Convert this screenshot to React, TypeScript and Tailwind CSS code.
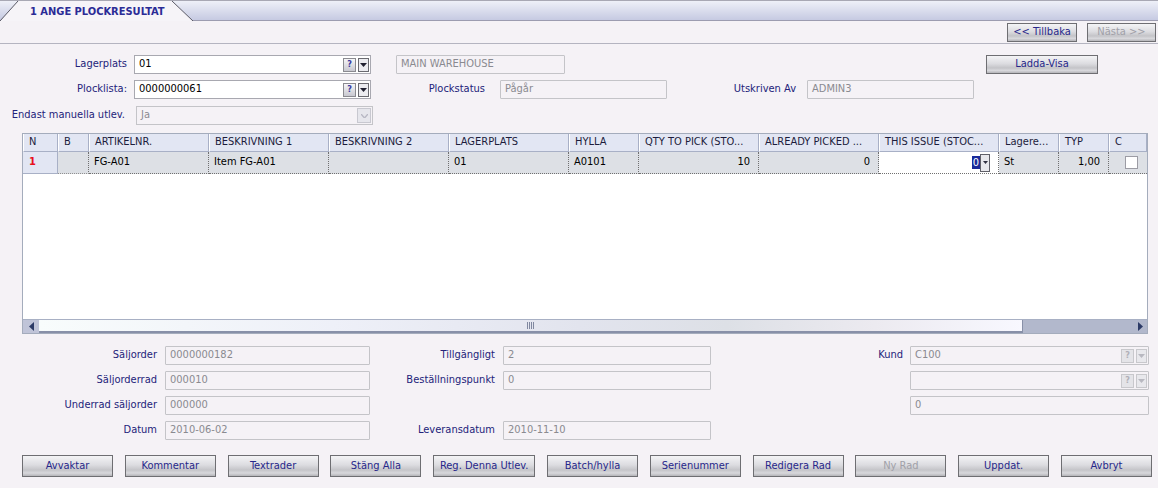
import React from 'react';

const font = { fontFamily: '"DejaVu Sans Condensed", "Liberation Sans", Arial, sans-serif' };

const Btn: React.FC<{ label: string; w: string; h?: string; disabled?: boolean }> = ({ label, w, h = 'h-[19px]', disabled }) => (
  <div
    className={`${w} ${h} flex items-center justify-center border border-[#6e6e72] bg-[linear-gradient(#f4f4f6_0%,#dcdce0_45%,#c4c4c8_70%,#d8d8dc_85%,#b4b4b8_100%)] text-[11px] ${
      disabled ? 'text-[#a0a0a8]' : 'text-[#27278a]'
    }`}
  >
    {label}
  </div>
);

const Lookup: React.FC<{ disabled?: boolean }> = ({ disabled }) => (
  <div className="flex items-center gap-[2px] pr-[1px]">
    <div
      className={`w-[13px] h-[14px] flex items-center justify-center border ${
        disabled ? 'border-[#c8c8cc] text-[#b0b0b8] bg-[#e4e4e8]' : 'border-[#8a8a90] text-[#3a3aa0] bg-[linear-gradient(#f6f6f8,#c8c8d0)]'
      } text-[9px] font-bold leading-none`}
    >
      ?
    </div>
    <div
      className={`w-[11px] h-[14px] flex items-center justify-center border ${
        disabled ? 'border-[#c8c8cc] bg-[#e8e8ec]' : 'border-[#6a6a70] bg-[#ececf0]'
      }`}
    >
      <svg width="7" height="4" viewBox="0 0 7 4">
        <path d="M0 0h7L3.5 4z" fill={disabled ? '#b8b8c0' : '#202030'} />
      </svg>
    </div>
  </div>
);

const RoField: React.FC<{ w: string; value: string; lookup?: boolean }> = ({ w, value, lookup }) => (
  <div className={`${w} h-[19px] flex items-center border border-[#c4c4c8] bg-[#f5f2f6] rounded-[1px]`}>
    <span className="flex-1 pl-[4px] text-[#8a8a90] truncate">{value}</span>
    {lookup && <Lookup disabled />}
  </div>
);

const Label: React.FC<{ w: string; text: string }> = ({ w, text }) => (
  <div className={`${w} text-right text-[#23237a] shrink-0`}>{text}</div>
);

const cols = 'grid-cols-[35px_31px_120px_120px_120px_120px_70px_120px_120px_120px_60px_50px_38px]';

const headers = [
  'N',
  'B',
  'ARTIKELNR.',
  'BESKRIVNING 1',
  'BESKRIVNING 2',
  'LAGERPLATS',
  'HYLLA',
  'QTY TO PICK (STO...',
  'ALREADY PICKED ...',
  'THIS ISSUE (STOC...',
  'Lagere...',
  'TYP',
  'C',
];

export default function App() {
  return (
    <div className="w-[1158px] h-[488px] overflow-hidden bg-[#f5f2f6] text-[11px] text-black" style={font}>
      {/* tab strip */}
      <div className="h-[21px] border-t border-[#a8a8b4] border-b border-b-[#9c9cb0] bg-[linear-gradient(#eef0f8,#c6cae2)] flex">
        <div className="relative w-[196px] h-full">
          <svg className="absolute inset-0" width="196" height="20" viewBox="0 0 196 20">
            <path d="M0 20 L18 0 L172 0 L193 20 Z" fill="#f6f4f8" />
            <path d="M0 20 L18 0 M172 0 L193 20" stroke="#5a5a66" strokeWidth="1" fill="none" />
          </svg>
          <div className="relative pl-[30px] pt-[3px] font-bold text-[#2b2b96] text-[11px]">1 ANGE PLOCKRESULTAT</div>
        </div>
      </div>

      {/* nav buttons */}
      <div className="h-[23px] flex items-center justify-end gap-[10px] pr-[2px] border-b border-[#b4b4c0]">
        <Btn label="<< Tillbaka" w="w-[70px]" />
        <Btn label="Nästa >>" w="w-[69px]" disabled />
      </div>

      {/* header form */}
      <div className="pt-[11px] flex flex-col gap-[6px]">
        <div className="flex items-center h-[19px]">
          <Label w="w-[127px]" text="Lagerplats" />
          <div className="ml-[7px] w-[237px] h-[19px] flex items-center border border-[#a8a8b0] bg-white">
            <span className="flex-1 pl-[4px]">01</span>
            <Lookup />
          </div>
          <div className="ml-[25px]">
            <RoField w="w-[169px]" value="MAIN WAREHOUSE" />
          </div>
          <div className="ml-[421px]">
            <Btn label="Ladda-Visa" w="w-[112px]" />
          </div>
        </div>
        <div className="flex items-center h-[19px]">
          <Label w="w-[127px]" text="Plocklista:" />
          <div className="ml-[7px] w-[237px] h-[19px] flex items-center border border-[#a8a8b0] bg-white">
            <span className="flex-1 pl-[4px]">0000000061</span>
            <Lookup />
          </div>
          <Label w="w-[114px]" text="Plockstatus" />
          <div className="ml-[15px]">
            <RoField w="w-[167px]" value="Pågår" />
          </div>
          <Label w="w-[129px]" text="Utskriven Av" />
          <div className="ml-[11px]">
            <RoField w="w-[167px]" value="ADMIN3" />
          </div>
        </div>
        <div className="flex items-center h-[19px] mt-[1px]">
          <Label w="w-[125px]" text="Endast manuella utlev." />
          <div className="ml-[11px] w-[237px] h-[19px] flex items-center border border-[#c4c4c8] bg-[#f5f2f6]">
            <span className="flex-1 pl-[4px] text-[#8a8a90]">Ja</span>
            <div className="w-[14px] h-[15px] mr-[1px] flex items-center justify-center border border-[#c8c8d0] bg-[#e6e6ec]">
              <svg width="7" height="4" viewBox="0 0 7 4">
                <path d="M0 0L3.5 4L7 0" stroke="#b8b8c4" fill="none" strokeWidth="1.4" />
              </svg>
            </div>
          </div>
        </div>
      </div>

      {/* grid */}
      <div className="ml-[22px] mt-[8px] w-[1126px] h-[201px] border border-[#a4acbc] bg-white flex flex-col">
        <div className={`grid ${cols} h-[18px] bg-[#e2e6f3]`}>
          {headers.map((h, i) => (
            <div
              key={i}
              className="border-l border-l-white border-r border-r-[#a8b0c6] border-b border-b-[#a8b0c6] pl-[5px] flex items-center text-[#1c1c3c] truncate"
            >
              {h}
            </div>
          ))}
        </div>
        <div className={`grid ${cols} h-[22px] bg-[#dde0e5]`}>
          <div className="bg-[#e2e6f3] border-r border-[#a8b0c6] border-b border-b-[#a8b0c6] flex items-center pl-[6px] text-[#e8101c] font-bold">1</div>
          <div className="border-r border-dotted border-r-[#707070] border-b border-b-[#909090]" />
          <div className="border-r border-dotted border-[#707070] flex items-center pl-[5px] border-b">FG-A01</div>
          <div className="border-r border-dotted border-[#707070] flex items-center pl-[5px] border-b">Item FG-A01</div>
          <div className="border-r border-dotted border-[#707070] border-b" />
          <div className="border-r border-dotted border-[#707070] flex items-center pl-[5px] border-b">01</div>
          <div className="border-r border-dotted border-[#707070] flex items-center pl-[5px] border-b">A0101</div>
          <div className="border-r border-dotted border-[#707070] flex items-center justify-end pr-[8px] border-b">10</div>
          <div className="border-r border-dotted border-[#707070] flex items-center justify-end pr-[8px] border-b">0</div>
          <div className="bg-white border-r border-dotted border-[#707070] border-b flex items-center justify-end pr-[8px]">
            <span className="bg-[#1a2a9a] text-white px-[1px] leading-[13px]">0</span>
            <div className="w-[10px] h-[18px] border border-[#606068] bg-[#e8e8ec] flex items-center justify-center">
              <svg width="5" height="3" viewBox="0 0 5 3">
                <path d="M0 0h5L2.5 3z" fill="#303040" />
              </svg>
            </div>
          </div>
          <div className="border-r border-dotted border-[#707070] flex items-center pl-[5px] border-b">St</div>
          <div className="border-r border-dotted border-[#707070] flex items-center justify-end pr-[8px] border-b">1,00</div>
          <div className="border-b border-dotted border-[#707070] flex items-center pl-[16px]">
            <div className="w-[13px] h-[13px] border border-[#9c9ca4] bg-white" />
          </div>
        </div>
        <div className="flex-1" />
        {/* horizontal scrollbar */}
        <div className="h-[14px] flex bg-[#b2b8cc] border-t border-[#a8b0c4]">
          <div className="w-[16px] flex items-center justify-center bg-[#c0c4d8]">
            <svg width="5" height="9" viewBox="0 0 5 9">
              <path d="M5 0v9L0 4.5z" fill="#2c3a66" />
            </svg>
          </div>
          <div className="w-[984px] bg-[linear-gradient(90deg,#f8fcfc,#eef0f8_30%,#e2e4ee_55%,#dde0e6_70%,#eceaf0_85%,#f8f8ff)] border-b-2 border-[#8890a8] border-r border-r-[#8890a8] flex items-center justify-center">
            <svg width="8" height="7" viewBox="0 0 8 7">
              <path d="M0.5 0v7M2.5 0v7M4.5 0v7M6.5 0v7" stroke="#8088a0" strokeWidth="1" />
            </svg>
          </div>
          <div className="flex-1" />
          <div className="w-[14px] flex items-center justify-center">
            <svg width="5" height="9" viewBox="0 0 5 9">
              <path d="M0 0v9L5 4.5z" fill="#2c3a66" />
            </svg>
          </div>
        </div>
      </div>

      {/* lower form */}
      <div className="mt-[12px] flex flex-col gap-[6px]">
        <div className="flex items-center h-[19px]">
          <Label w="w-[157px]" text="Säljorder" />
          <div className="ml-[8px]"><RoField w="w-[205px]" value="0000000182" /></div>
          <Label w="w-[125px]" text="Tillgängligt" />
          <div className="ml-[8px]"><RoField w="w-[208px]" value="2" /></div>
          <Label w="w-[192px]" text="Kund" />
          <div className="ml-[7px]"><RoField w="w-[239px]" value="C100" lookup /></div>
        </div>
        <div className="flex items-center h-[19px]">
          <Label w="w-[157px]" text="Säljorderrad" />
          <div className="ml-[8px]"><RoField w="w-[205px]" value="000010" /></div>
          <Label w="w-[125px]" text="Beställningspunkt" />
          <div className="ml-[8px]"><RoField w="w-[208px]" value="0" /></div>
          <div className="ml-[199px]"><RoField w="w-[239px]" value="" lookup /></div>
        </div>
        <div className="flex items-center h-[19px]">
          <Label w="w-[157px]" text="Underrad säljorder" />
          <div className="ml-[8px]"><RoField w="w-[205px]" value="000000" /></div>
          <div className="ml-[540px]"><RoField w="w-[239px]" value="0" /></div>
        </div>
        <div className="flex items-center h-[19px]">
          <Label w="w-[157px]" text="Datum" />
          <div className="ml-[8px]"><RoField w="w-[205px]" value="2010-06-02" /></div>
          <Label w="w-[125px]" text="Leveransdatum" />
          <div className="ml-[8px]"><RoField w="w-[208px]" value="2010-11-10" /></div>
        </div>
      </div>

      {/* bottom buttons */}
      <div className="mt-[15px] ml-[22px] w-[1130px] flex justify-between">
        <Btn label="Avvaktar" w="w-[91px]" h="h-[22px]" />
        <Btn label="Kommentar" w="w-[91px]" h="h-[22px]" />
        <Btn label="Textrader" w="w-[91px]" h="h-[22px]" />
        <Btn label="Stäng Alla" w="w-[91px]" h="h-[22px]" />
        <Btn label="Reg. Denna Utlev." w="w-[102px]" h="h-[22px]" />
        <Btn label="Batch/hylla" w="w-[91px]" h="h-[22px]" />
        <Btn label="Serienummer" w="w-[91px]" h="h-[22px]" />
        <Btn label="Redigera Rad" w="w-[91px]" h="h-[22px]" />
        <Btn label="Ny Rad" w="w-[91px]" h="h-[22px]" disabled />
        <Btn label="Uppdat." w="w-[91px]" h="h-[22px]" />
        <Btn label="Avbryt" w="w-[91px]" h="h-[22px]" />
      </div>
    </div>
  );
}
